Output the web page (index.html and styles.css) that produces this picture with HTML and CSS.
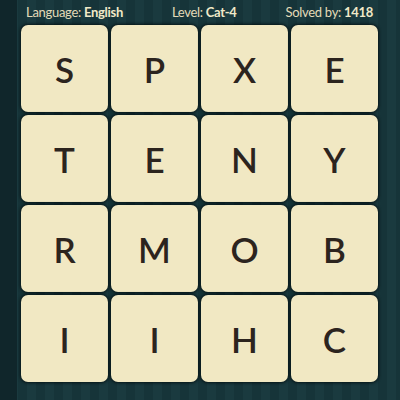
FILE: index.html
```html
<!DOCTYPE html>
<html>
<head>
<meta charset="utf-8">
<link rel="stylesheet" href="styles.css">
</head>
<body>
<div class="page">
  <div class="header">
    <span class="item">Language: <b>English</b></span>
    <span class="item">Level: <b>Cat-4</b></span>
    <span class="item">Solved by: <b>1418</b></span>
  </div>
  <div class="grid">
    <div class="tile">S</div><div class="tile">P</div><div class="tile">X</div><div class="tile">E</div>
    <div class="tile">T</div><div class="tile">E</div><div class="tile">N</div><div class="tile">Y</div>
    <div class="tile">R</div><div class="tile">M</div><div class="tile">O</div><div class="tile">B</div>
    <div class="tile">I</div><div class="tile">I</div><div class="tile">H</div><div class="tile">C</div>
  </div>
</div>
</body>
</html>
```
FILE: styles.css
```css
html, body {
  margin: 0;
  padding: 0;
}
body {
  width: 400px;
  height: 400px;
  overflow: hidden;
  background-color: #163439;
  background-image:
    linear-gradient(to right, #10262b 0, #10262b 17px, transparent 17px),
    repeating-linear-gradient(to right, #163439 0, #163439 9px, #1a3a3f 9px, #1a3a3f 18px);
  font-family: Lato, "Open Sans", sans-serif;
}
.page {
  display: flex;
  flex-direction: column;
}
.header {
  height: 25px;
  display: flex;
  justify-content: space-between;
  align-items: center;
  padding: 0 27px 0 26px;
  color: #e3dab8;
  font-size: 13px;
  letter-spacing: -0.3px;
  line-height: 1;
}
.header b {
  font-weight: 700;
  color: #f1e9c8;
}
.grid {
  display: grid;
  grid-template-columns: repeat(4, 87px);
  grid-auto-rows: 87px;
  gap: 3px;
  padding-left: 21px;
}
.tile {
  background: #f1e8c3;
  border-radius: 7px;
  box-shadow: 0 0 3px 1px rgba(5, 15, 18, 0.85);
  display: flex;
  align-items: center;
  justify-content: center;
  font-family: Lato, sans-serif;
  font-weight: 600;
  font-size: 35px;
  color: #2c241e;
}
```
